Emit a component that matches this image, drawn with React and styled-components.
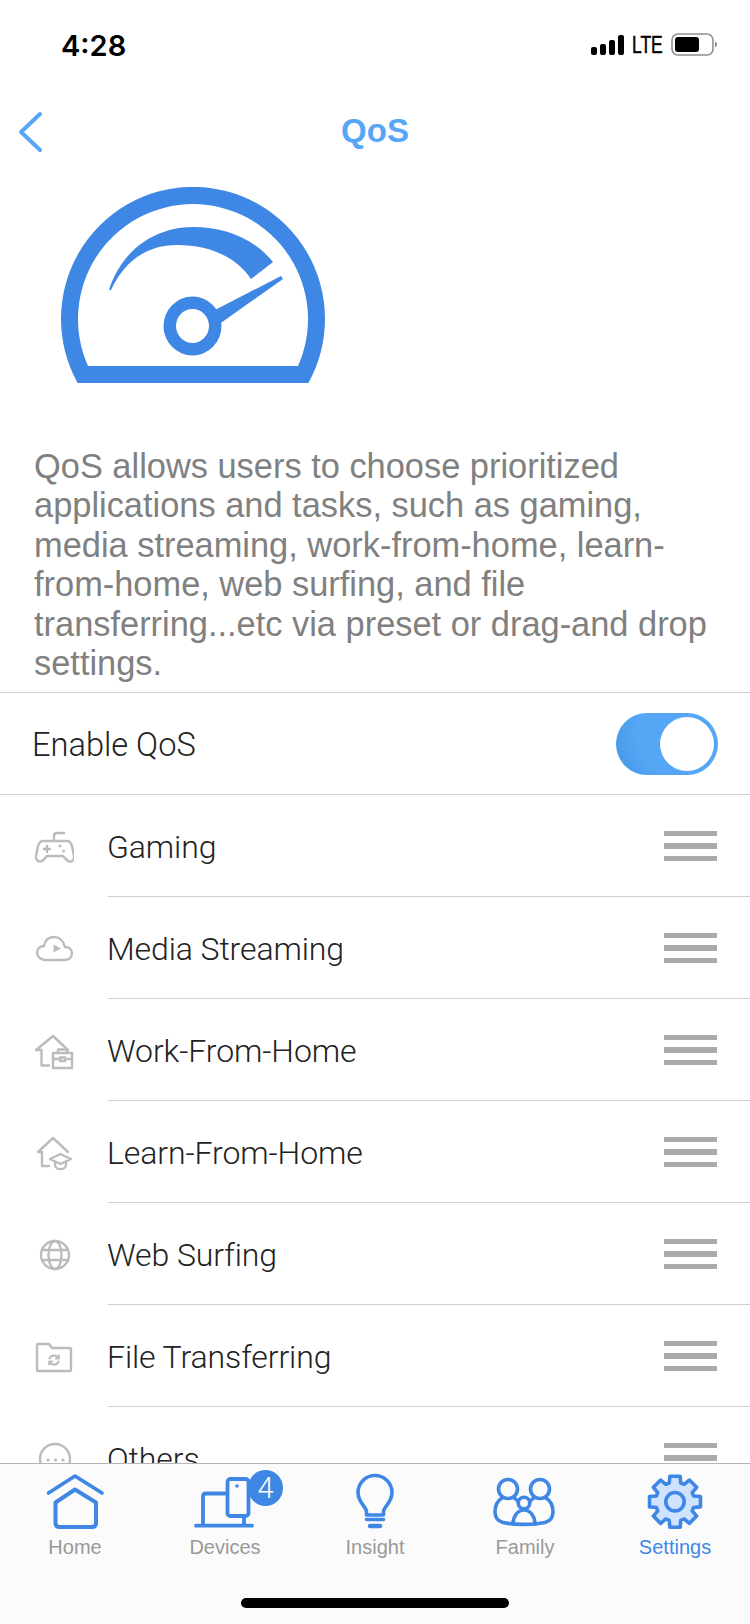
import React from 'react';
import styled, { createGlobalStyle } from 'styled-components';

const BLUE = '#3f87e5';
const SKY = '#55a6f5';
const GREY = '#bcbcbc';

const GlobalStyle = createGlobalStyle`
  html, body {
    margin: 0;
    padding: 0;
    background: #fff;
  }
  * {
    box-sizing: border-box;
  }
`;

const Page = styled.div`
  width: 750px;
  height: 1624px;
  display: flex;
  flex-direction: column;
  overflow: hidden;
  background: #fff;
  font-family: 'Liberation Sans', Arial, sans-serif;
`;

const Content = styled.main`
  flex: 1;
  min-height: 0;
  overflow: hidden;
`;

const StatusBar = styled.div`
  height: 90px;
  display: flex;
  align-items: center;
  justify-content: space-between;
  padding: 0 33px 0 61px;
`;

const Time = styled.span`
  font-family: Inter, 'Liberation Sans', sans-serif;
  font-size: 29px;
  font-weight: 600;
  color: #000;
`;

const StatusIcons = styled.div`
  display: flex;
  align-items: center;
`;

const Lte = styled.span`
  width: 30px;
  margin: 0 9px 0 8px;
  font-size: 23px;
  font-weight: 400;
  color: #000;
  -webkit-text-stroke: 0.5px #000;
  transform: scaleX(0.76);
  transform-origin: left center;
  white-space: nowrap;
`;

const NavBar = styled.header`
  position: relative;
  height: 82px;
  display: flex;
  align-items: center;
  justify-content: center;
`;

const BackButton = styled.button`
  position: absolute;
  left: 18px;
  top: 21px;
  width: 26px;
  height: 42px;
  padding: 0;
  border: 0;
  background: none;
`;

const Title = styled.h1`
  margin: 0;
  font-size: 33px;
  font-weight: 700;
  color: ${SKY};
`;

const Gauge = styled.svg`
  display: block;
  margin: 15px 0 0 61px;
`;

const Description = styled.p`
  margin: 64px 0 0;
  padding: 0 34px 9px;
  font-size: 34.4px;
  line-height: 39.4px;
  color: #808080;
`;

const ToggleRow = styled.div`
  height: 103px;
  display: flex;
  align-items: center;
  justify-content: space-between;
  padding: 0 32px;
  border-top: 1px solid #cfcfcf;
  border-bottom: 1px solid #cfcfcf;
  font-family: Roboto, 'Liberation Sans', sans-serif;
  font-weight: 300;
  font-size: 32.6px;
  color: #222;
`;

const ToggleLabel = styled.span`
  padding-top: 2px;
`;

const Toggle = styled.div`
  width: 102px;
  height: 62px;
  padding: 4px;
  display: flex;
  justify-content: flex-end;
  border-radius: 31px;
  background: radial-gradient(circle at 68% 30%, ${SKY} 60%, #4594e6 100%);
`;

const Knob = styled.div`
  width: 54px;
  height: 54px;
  border-radius: 50%;
  background: #fff;
`;

const Row = styled.div`
  height: 102px;
  display: flex;
  align-items: stretch;
`;

const IconCell = styled.div`
  width: 108px;
  flex: none;
  padding-left: 34px;
  display: flex;
  align-items: center;
`;

const RowBody = styled.div`
  flex: 1;
  display: flex;
  align-items: center;
  justify-content: space-between;
  padding-right: 33px;
  border-bottom: 1px solid #cfcfcf;
`;

const RowLabel = styled.span`
  padding-top: 2px;
  margin-left: -1px;
  font-family: Roboto, 'Liberation Sans', sans-serif;
  font-weight: 300;
  font-size: 32px;
  letter-spacing: -0.1px;
  color: #222;
`;

const Handle = styled.div`
  width: 53px;
  display: flex;
  flex-direction: column;
  gap: 7px;
`;

const HandleBar = styled.span`
  display: block;
  height: 5.5px;
  background: #aaa;
`;

const TabBar = styled.nav`
  position: relative;
  height: 161px;
  flex: none;
  display: grid;
  grid-template-columns: repeat(5, 150px);
  align-content: start;
  padding-top: 8px;
  background: #fbfbfb;
  border-top: 1px solid #b4b4b4;
`;

const Tab = styled.div`
  display: flex;
  flex-direction: column;
  align-items: center;
  font-size: 20px;
  line-height: 24px;
  color: ${(p) => (p.$active ? BLUE : '#999')};
`;

const TabIcon = styled.div`
  position: relative;
  width: 60px;
  height: 60px;
  margin-bottom: 3px;
`;

const Badge = styled.span`
  position: absolute;
  left: 53px;
  top: -2px;
  width: 35px;
  height: 36px;
  display: flex;
  align-items: center;
  justify-content: center;
  border-radius: 50%;
  background: ${BLUE};
  color: #fff;
  font-family: Roboto, 'Liberation Sans', sans-serif;
  font-weight: 300;
  font-size: 29px;
`;

const HomeIndicator = styled.div`
  position: absolute;
  left: 241px;
  bottom: 16px;
  width: 268px;
  height: 10px;
  border-radius: 5px;
  background: #000;
`;

const Line = (p) => (
  <svg width="40" height="40" viewBox="0 0 40 40" fill="none" stroke={GREY} strokeWidth="2.4" strokeLinecap="round" strokeLinejoin="round" {...p} />
);

const TabSvg = (p) => (
  <svg width="60" height="60" viewBox="0 0 60 60" fill="none" stroke={BLUE} strokeWidth="3.6" strokeLinecap="round" strokeLinejoin="round" style={{ overflow: 'visible' }} {...p} />
);

const GamingIcon = () => (
  <Line>
    <path d="M30 7H23Q20 7 20 10V15" />
    <path d="M9 15H33C36 15 37 17 38 20L40 30C40.5 34 38 36 35 35.5C33 35 31 32 29 30H13C11 32 9 35 7 35.5C4 36 1.5 34 2 30L4 20C5 17 6 15 9 15Z" />
    <path d="M10 23H16M13 20V26" />
    <path d="M26 20h.1M29.5 25h.1" strokeWidth="3" />
  </Line>
);

const CloudIcon = () => (
  <Line>
    <path d="M12 32H30C35 32 38 29 38 25.5C38 21 34.5 18.5 31 19C29.5 12.5 25 9 20 9C15 9 11 12 10 18C6 18 3 21 3 25C3 29 7 32 12 32Z" />
    <path d="M19.5 16.5L27 20.5L19.5 24.5Z" fill={GREY} stroke="none" />
  </Line>
);

const WorkIcon = () => (
  <Line>
    <path d="M34 20L19 6L2 20H7.5V35.5H15" />
    <path d="M19 23H38V38H19Z" />
    <path d="M24 23V19.5H33V23M19 29H26M31 29H38M26 27.5H31V31H26Z" />
  </Line>
);

const LearnIcon = () => (
  <Line>
    <path d="M34 20L19 6L4 20H8V34H15" />
    <path d="M16 27L26.5 22L37 27L26.5 32Z" />
    <path d="M21 30V33C21 38.5 32 38.5 32 33V30" />
  </Line>
);

const GlobeIcon = () => (
  <Line>
    <circle cx="21" cy="21" r="14" />
    <ellipse cx="21" cy="21" rx="6.5" ry="14" />
    <path d="M8.5 16H33.5M8.5 26H33.5" />
  </Line>
);

const FolderIcon = () => (
  <Line>
    <path d="M3 9Q3 8 4 8H15L18 12H36Q37 12 37 13V34Q37 35 36 35H4Q3 35 3 34Z" />
    <path d="M15.5 22.5A5 5 0 0 1 24.5 22M24.8 19.5V22.5H21.8M24.5 25.5A5 5 0 0 1 15.5 26M15.2 28.5V25.5H18.2" strokeWidth="2" />
  </Line>
);

const OthersIcon = () => (
  <Line>
    <circle cx="21" cy="21" r="15" />
    <path d="M14 22h.1M21.5 22h.1M29 22h.1" strokeWidth="3.2" />
  </Line>
);

const HomeTabIcon = () => (
  <TabSvg>
    <path d="M3.5 21L30 4L57 21" />
    <path d="M30 17.5L10.5 30.5V51Q10.5 55 14.5 55H47Q51 55 51 51V30.5Z" strokeWidth="4" />
  </TabSvg>
);

const DevicesTabIcon = () => (
  <TabSvg>
    <path d="M30 21.5H11Q8 21.5 8 24.5V53" strokeWidth="3.8" />
    <path d="M1 53.7H57M49 45V53" strokeWidth="3.8" />
    <rect x="32.5" y="7" width="21" height="37" rx="3" strokeWidth="3.8" />
    <circle cx="42" cy="14" r="1.8" fill={BLUE} stroke="none" />
  </TabSvg>
);

const InsightTabIcon = () => (
  <TabSvg>
    <path d="M21.5 43V40C21.5 34.5 13 31 13 20.5A17 17 0 0 1 47 20.5C47 31 38.5 34.5 38.5 40V43Z" />
    <path d="M21.5 47.5H38.5" />
    <path d="M25 54H35" strokeWidth="4.4" />
  </TabSvg>
);

const FamilyTabIcon = () => (
  <TabSvg>
    <circle cx="13" cy="17" r="9.5" />
    <circle cx="45" cy="17" r="9.5" />
    <circle cx="29" cy="31" r="5.8" />
    <path d="M7 26C2 29 0 34 0 40C0 46 3 49 8 50.5C20 53 38 53 50 50.5C55 49 58 46 58 40C58 34 56 29 51 26" />
    <path d="M19 26C21 27 22 28 23.5 30M39 26C37 27 36 28 34.5 30" />
    <path d="M18 52C18 44 23 38 29 38C35 38 40 44 40 52" />
  </TabSvg>
);

// eight toothed outline, same proportions as the tab bar gear
const gearPath = (() => {
  const cx = 30;
  const cy = 29.7;
  const pts = [];
  for (let i = 0; i < 8; i += 1) {
    const a = (i * Math.PI) / 4 - Math.PI / 2;
    [[-0.3, 19.5], [-0.2, 26], [0.2, 26], [0.3, 19.5]].forEach(([da, r]) => {
      pts.push(`${(cx + r * Math.cos(a + da)).toFixed(2)} ${(cy + r * Math.sin(a + da)).toFixed(2)}`);
    });
  }
  return `M${pts.join('L')}Z`;
})();

const SettingsTabIcon = () => (
  <TabSvg>
    <path d={gearPath} fill="#cfe2ff" strokeWidth="3.6" />
    <circle cx="30" cy="29.7" r="9.2" strokeWidth="3.6" />
  </TabSvg>
);

const items = [
  { label: 'Gaming', Icon: GamingIcon },
  { label: 'Media Streaming', Icon: CloudIcon },
  { label: 'Work-From-Home', Icon: WorkIcon },
  { label: 'Learn-From-Home', Icon: LearnIcon },
  { label: 'Web Surfing', Icon: GlobeIcon },
  { label: 'File Transferring', Icon: FolderIcon },
  { label: 'Others', Icon: OthersIcon },
];

const tabs = [
  { label: 'Home', Icon: HomeTabIcon },
  { label: 'Devices', Icon: DevicesTabIcon, badge: 4 },
  { label: 'Insight', Icon: InsightTabIcon },
  { label: 'Family', Icon: FamilyTabIcon },
  { label: 'Settings', Icon: SettingsTabIcon, active: true },
];

function App() {
  return (
    <Page>
      <GlobalStyle />
      <Content>
        <StatusBar>
          <Time>4:28</Time>
          <StatusIcons>
            <svg width="33" height="20" viewBox="0 0 33 20" fill="#000">
              <rect x="0" y="12" width="6" height="8" rx="2" />
              <rect x="9" y="9" width="6" height="11" rx="2" />
              <rect x="18" y="5" width="6" height="15" rx="2" />
              <rect x="27" y="0" width="6" height="20" rx="2" />
            </svg>
            <Lte>LTE</Lte>
            <svg width="46" height="24" viewBox="0 0 46 24" fill="none">
              <rect x="1" y="1" width="41" height="21" rx="6" stroke="#8f8f8f" strokeWidth="1.6" />
              <rect x="4" y="4" width="24" height="15" rx="3" fill="#000" />
              <path d="M44 8.5C45.5 9 46 10.5 46 11.5C46 12.5 45.5 14 44 14.5Z" fill="#8f8f8f" />
            </svg>
          </StatusIcons>
        </StatusBar>

        <NavBar>
          <BackButton aria-label="Back">
            <svg width="26" height="42" viewBox="0 0 26 42" fill="none" stroke={SKY} strokeWidth="4" strokeLinecap="round" strokeLinejoin="round">
              <path d="M22 3L3 21L22 39" />
            </svg>
          </BackButton>
          <Title>QoS</Title>
        </NavBar>

        <Gauge width="264" height="196" viewBox="61 187 264 196" fill={BLUE}>
          <path fillRule="evenodd" d="M77.6 383A132 132 0 1 1 308.4 383ZM88 366H298A115 115 0 1 0 88 366Z" />
          <path d="M109 290C121 252 153 227 193 227C226 227 254 239 273 262L251 279C236 257 210 245 177 245C146 245 124 262 111 290Z" />
          <path fillRule="evenodd" d="M163.5 326A29 29.5 0 1 1 221.5 326A29 29.5 0 1 1 163.5 326ZM176 326A16.5 17 0 1 0 209 326A16.5 17 0 1 0 176 326Z" />
          <path d="M213 311L281 276L283 279L218 325Z" />
        </Gauge>

        <Description>
          QoS allows users to choose prioritized applications and tasks, such as gaming, media streaming, work-from-home, learn-from-home, web surfing, and file transferring...etc via preset or drag-and drop settings.
        </Description>

        <ToggleRow>
          <ToggleLabel>Enable QoS</ToggleLabel>
          <Toggle>
            <Knob />
          </Toggle>
        </ToggleRow>

        {items.map(({ label, Icon }) => (
          <Row key={label}>
            <IconCell>
              <Icon />
            </IconCell>
            <RowBody>
              <RowLabel>{label}</RowLabel>
              <Handle>
                <HandleBar />
                <HandleBar />
                <HandleBar />
              </Handle>
            </RowBody>
          </Row>
        ))}
      </Content>

      <TabBar>
        {tabs.map(({ label, Icon, badge, active }) => (
          <Tab key={label} $active={active}>
            <TabIcon>
              <Icon />
              {badge && <Badge>{badge}</Badge>}
            </TabIcon>
            {label}
          </Tab>
        ))}
        <HomeIndicator />
      </TabBar>
    </Page>
  );
}

export default App;
